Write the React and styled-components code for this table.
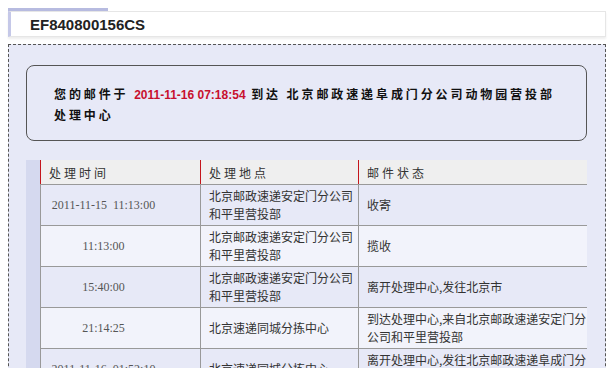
import React from "react";
import styled, { createGlobalStyle } from "styled-components";

const rows = [
  { time: "2011-11-15\u00a0\u00a011:13:00", place: ["北京邮政速递安定门分公司", "和平里营投部"], status: ["收寄"] },
  { time: "11:13:00", place: ["北京邮政速递安定门分公司", "和平里营投部"], status: ["揽收"] },
  { time: "15:40:00", place: ["北京邮政速递安定门分公司", "和平里营投部"], status: ["离开处理中心,发往北京市"] },
  { time: "21:14:25", place: ["北京速递同城分拣中心"], status: ["到达处理中心,来自北京邮政速递安定门分", "公司和平里营投部"] },
  { time: "2011-11-16\u00a0\u00a001:52:10", place: ["北京速递同城分拣中心"], status: ["离开处理中心,发往北京邮政速递阜成门分", "公司动物园营投部"] },
];

const App = () => {
  return (
    <>
      <GlobalStyle />
      <Page>
        <TabStrip />
        <TitleBar>EF840800156CS</TitleBar>
        <Panel>
          <Notice>
            您的邮件于 <Stamp>2011-11-16 07:18:54</Stamp> 到达 北京邮政速递阜成门分公司动物园营投部处理中心
          </Notice>
          <TableWrap>
            <Table>
              <colgroup>
                <col style={{ width: 160 }} />
                <col style={{ width: 158 }} />
                <col />
              </colgroup>
              <thead>
                <tr>
                  <HeadCell>处理时间</HeadCell>
                  <HeadCell>处理地点</HeadCell>
                  <HeadCell>邮件状态</HeadCell>
                </tr>
              </thead>
              <tbody>
                {rows.map((r, i) => (
                  <Row key={i} $alt={i % 2 === 1}>
                    <TimeCell>{r.time}</TimeCell>
                    <TextCell>
                      {r.place.map((l, j) => (
                        <Line key={j}>{l}</Line>
                      ))}
                    </TextCell>
                    <TextCell>
                      {r.status.map((l, j) => (
                        <Line key={j}>{l}</Line>
                      ))}
                    </TextCell>
                  </Row>
                ))}
              </tbody>
            </Table>
          </TableWrap>
        </Panel>
      </Page>
    </>
  );
};

const GlobalStyle = createGlobalStyle`
  html, body {
    margin: 0;
    padding: 0;
    background: #fff;
    height: 368px;
    overflow: hidden;
  }
  body {
    font-family: "Noto Sans CJK SC", "Liberation Sans", sans-serif;
  }
`;

const Page = styled.div`
  padding: 8px 9px 0 8px;
  display: flex;
  flex-direction: column;
`;

const TabStrip = styled.div`
  width: 100px;
  height: 3px;
  background: #b7bbe0;
`;

const TitleBar = styled.div`
  height: 24px;
  display: flex;
  align-items: center;
  padding-left: 19px;
  background: #fff;
  border: 1px solid #e6e6e6;
  border-left: 3px solid #c5c8e8;
  box-shadow: 0 2px 2px rgba(0, 0, 0, 0.07);
  font-family: "Liberation Sans", Arial, sans-serif;
  font-weight: bold;
  font-size: 15px;
  color: #222;
`;

const Panel = styled.div`
  margin-top: 7px;
  border: 1px dashed #555;
  background: #e7e9f7;
  padding: 20px 18px 0 17px;
  height: 400px;
`;

const Notice = styled.div`
  height: 76px;
  box-sizing: border-box;
  border: 1px solid #555;
  border-radius: 8px;
  padding: 18px 26px 0 27px;
  font-size: 12px;
  font-weight: bold;
  letter-spacing: 2.9px;
  line-height: 19px;
  color: #111;
`;

const Stamp = styled.span`
  font-family: "Liberation Sans", Arial, sans-serif;
  letter-spacing: 0;
  color: #c8102e;
`;

const TableWrap = styled.div`
  margin-top: 19px;
  border-left: 14px solid #d5d9ef;
`;

const Table = styled.table`
  width: 100%;
  border-collapse: collapse;
  table-layout: fixed;
  font-size: 12px;
`;

const HeadCell = styled.th`
  height: 24px;
  padding: 0 0 0 8px;
  text-align: left;
  font-weight: normal;
  letter-spacing: 3px;
  color: #333;
  background: #efefef;
  border-left: 1px solid #c4161c;
  border-bottom: 1px solid #999;
`;

const Row = styled.tr`
  height: 41px;
  background: ${(p) => (p.$alt ? "#f2f3fb" : "#e7e9f7")};
`;

const TimeCell = styled.td`
  padding: 0 34px 0 0;
  text-align: center;
  font-family: "Liberation Serif", "Times New Roman", serif;
  color: #555;
  border-left: 1px solid #999;
  border-bottom: 1px solid #999;
`;

const TextCell = styled.td`
  padding: 0 0 0 8px;
  color: #333;
  line-height: 18px;
  white-space: nowrap;
  border-left: 1px solid #999;
  border-bottom: 1px solid #999;
`;

const Line = styled.div``;

export default App;
